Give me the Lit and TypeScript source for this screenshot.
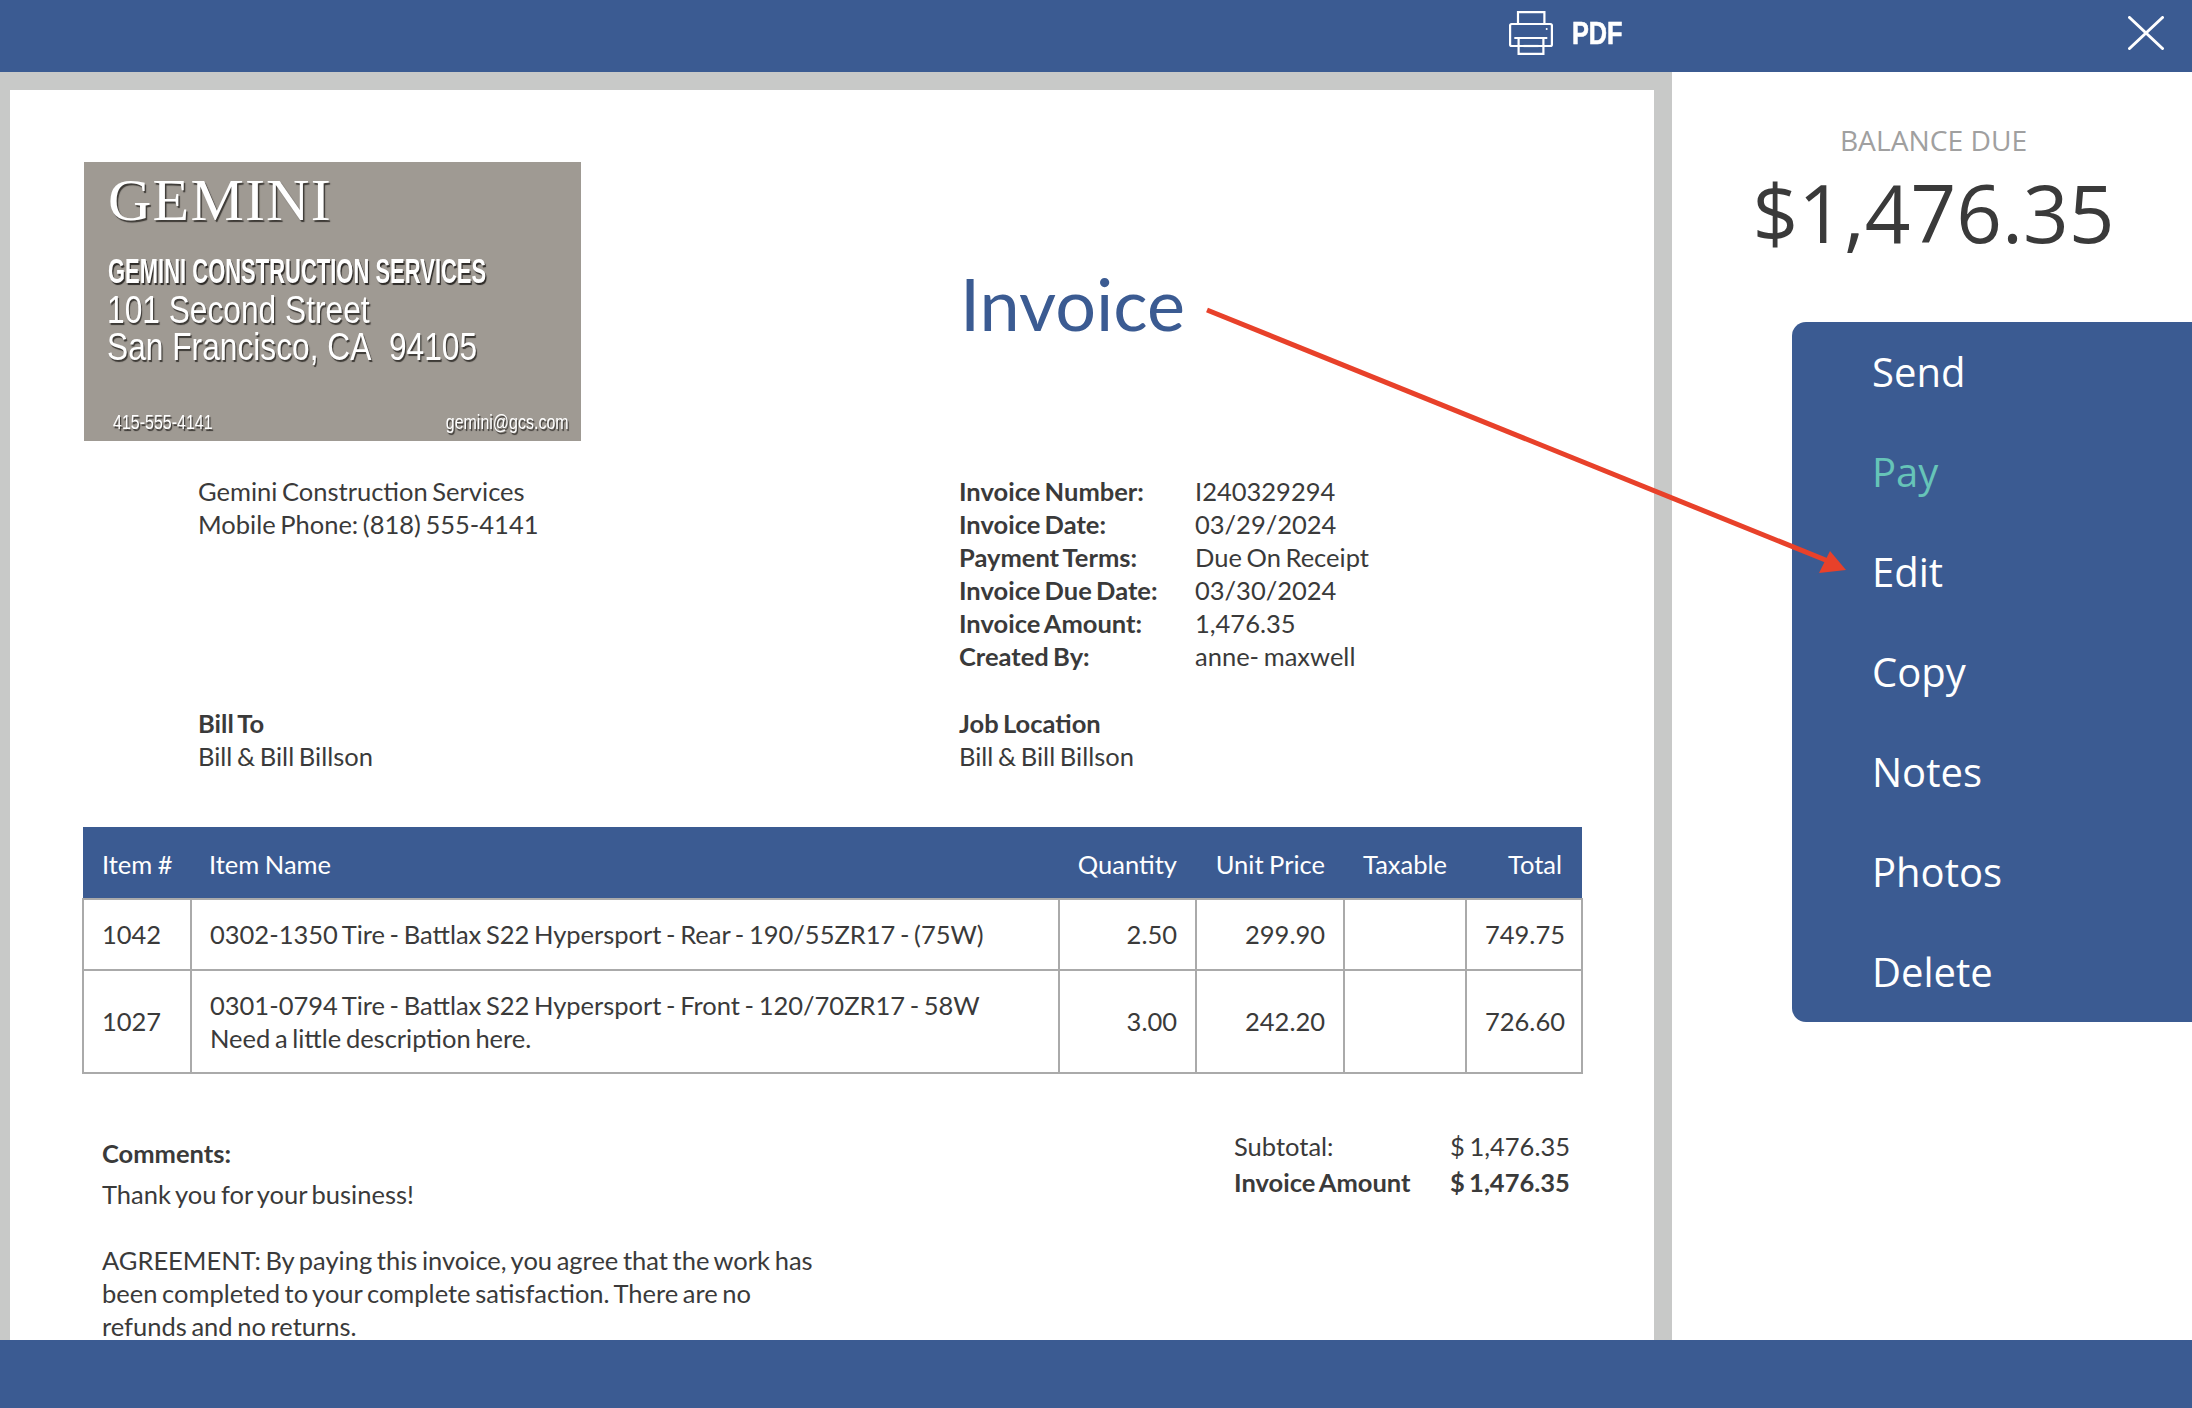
import { LitElement, html, css, svg } from 'lit';
import { customElement } from 'lit/decorators.js';

const details = [
  ['Invoice Number:', 'I240329294'],
  ['Invoice Date:', '03/29/2024'],
  ['Payment Terms:', 'Due On Receipt'],
  ['Invoice Due Date:', '03/30/2024'],
  ['Invoice Amount:', '1,476.35'],
  ['Created By:', 'anne- maxwell'],
];

const actions = ['Send', 'Pay', 'Edit', 'Copy', 'Notes', 'Photos', 'Delete'];

const printerIcon = svg`
  <svg class="printer" viewBox="0 0 44 44" fill="none" stroke="#fff" stroke-width="2.2">
    <path d="M9 13V1.2h26.4V13" />
    <rect x="1.1" y="13" width="41.8" height="22" rx="1.5" />
    <path d="M5.3 27h33" />
    <path d="M9.6 27v15.9h24.8V27" />
    <path d="M14.5 35h15" />
    <circle cx="37.7" cy="18" r="1" fill="#fff" stroke="none" />
  </svg>`;

const closeIcon = svg`
  <svg class="close" viewBox="0 0 36 34" fill="none" stroke="#fff" stroke-width="3" stroke-linecap="round">
    <path d="M1.5 1.5 34.5 32.5M34.5 1.5 1.5 32.5" />
  </svg>`;

@customElement('app-root')
export class AppRoot extends LitElement {
  static styles = css`
    :host {
      display: flex;
      flex-direction: column;
      position: relative;
      width: 2192px;
      height: 1408px;
      overflow: hidden;
      background: #fff;
      color: #3a3a3a;
      font-family: Lato, sans-serif;
      font-size: 25.5px;
      line-height: 33px;
      word-spacing: -1.9px;
    }

    .topbar {
      flex: none;
      height: 72px;
      display: flex;
      align-items: center;
      background: #3b5b92;
      color: #fff;
      padding: 0 0 6px 1509px;
      box-sizing: border-box;
    }

    .printer {
      width: 44px;
      height: 44px;
    }

    /* no narrow face is installed, so the condensed lettering is squeezed */
    .pdf {
      margin-left: 19px;
      font-family: 'Liberation Sans', sans-serif;
      font-weight: 700;
      font-size: 32px;
      -webkit-text-stroke: 0.6px #fff;
      transform: scaleX(0.79);
      transform-origin: left center;
    }

    .close {
      width: 36px;
      height: 34px;
      margin-left: auto;
      margin-right: 28px;
    }

    .middle {
      flex: 1;
      min-height: 0;
      display: flex;
    }

    .viewer {
      flex: none;
      width: 1672px;
      box-sizing: border-box;
      padding: 18px 18px 0 10px;
      background: #c8c9c8;
      overflow: hidden;
    }

    .sheet {
      background: #fff;
      height: 100%;
      padding: 72px 72px 0;
      box-sizing: border-box;
      overflow: hidden;
    }

    .head {
      display: grid;
      grid-template-columns: 875px 1fr;
      row-gap: 34px;
      margin-left: 2px;
    }

    .logo {
      width: 497px;
      height: 279px;
      box-sizing: border-box;
      padding: 8px 12px 0 23px;
      background: #9f9a93;
      color: #fff;
      font-family: 'Liberation Sans', sans-serif;
      text-shadow: 1.5px 1.5px 1px #3d3a36;
      filter: blur(0.5px);
      word-spacing: normal;
      overflow: hidden;
    }

    .logo-mark {
      font-family: 'Liberation Serif', serif;
      font-size: 60px;
      line-height: 60px;
      letter-spacing: 1.2px;
      margin-left: 1px;
    }

    .logo-name {
      width: max-content;
      margin: 21px 0 0 1px;
      font-size: 35px;
      font-weight: 700;
      line-height: 40px;
      text-shadow: 2px 2px 1px #2f2c29;
      transform: scaleX(0.628);
      transform-origin: left center;
    }

    .logo-line {
      width: max-content;
      font-size: 39px;
      line-height: 37px;
      transform: scaleX(0.813);
      transform-origin: left center;
    }

    .logo-foot {
      display: flex;
      justify-content: space-between;
      margin-top: 45px;
      padding-left: 6px;
      font-size: 20px;
      line-height: 24px;
    }

    .logo-foot span {
      transform: scaleX(0.8);
      transform-origin: left center;
    }

    .logo-foot span:last-child {
      transform-origin: right center;
    }

    .title {
      align-self: center;
      margin: 2px 0 0 1px;
      color: #3b5b92;
      font-size: 72px;
      font-weight: 400;
      line-height: 90px;
    }

    .address {
      padding-left: 114px;
    }

    .details {
      display: grid;
      grid-template-columns: 236px auto;
      justify-content: start;
    }

    b {
      font-weight: 700;
    }

    table {
      width: 1499px;
      margin-top: 54px;
      border-collapse: collapse;
      table-layout: fixed;
    }

    th {
      height: 72px;
      padding: 3px 19px 0 18px;
      box-sizing: border-box;
      background: #3b5b92;
      color: #fff;
      font-weight: 400;
      text-align: left;
      white-space: nowrap;
      word-spacing: -1px;
    }

    th:first-child {
      padding-left: 19px;
    }

    th:last-child {
      padding-right: 20px;
    }

    td {
      padding: 0 18px;
      border: 2px solid #aaa;
      white-space: nowrap;
    }

    td:last-child {
      padding-right: 22px;
    }

    .row-one td {
      height: 69px;
    }

    .row-two td {
      height: 101px;
    }

    .num {
      text-align: right;
    }

    .foot {
      display: flex;
      justify-content: space-between;
      align-items: flex-start;
      padding: 54px 12px 0 20px;
    }

    .comments {
      margin-top: 9px;
      white-space: nowrap;
    }

    .comments b {
      display: block;
      margin-bottom: 8px;
    }

    .totals {
      display: grid;
      grid-template-columns: 216px auto;
      line-height: 36px;
    }

    .balance {
      flex: 1;
      display: flex;
      flex-direction: column;
      align-items: center;
      background: #fff;
      padding: 50px 0 0 3px;
      font-family: 'Open Sans', sans-serif;
      word-spacing: normal;
    }

    .balance-label {
      color: #a0a0a0;
      font-size: 28.2px;
      line-height: 36px;
    }

    .balance-value {
      margin-top: 2px;
      font-size: 80px;
      line-height: 104px;
    }

    .actions {
      align-self: stretch;
      margin: 58px 0 0 117px;
      background: #3b5b92;
      border-radius: 14px 0 0 14px;
    }

    .action {
      height: 100px;
      box-sizing: border-box;
      display: flex;
      align-items: center;
      padding: 0 0 2px 80px;
      color: #fff;
      font-size: 40px;
    }

    .action.pay {
      color: #66c4b8;
    }

    .bottombar {
      flex: none;
      height: 68px;
      background: #3b5b92;
    }

    .arrow {
      position: absolute;
      inset: 0;
      width: 100%;
      height: 100%;
      pointer-events: none;
    }
  `;

  render() {
    return html`
      <div class="topbar">
        ${printerIcon}
        <span class="pdf">PDF</span>
        ${closeIcon}
      </div>
      <div class="middle">
        <div class="viewer">
          <div class="sheet">
            <div class="head">
              <div class="logo">
                <div class="logo-mark">GEMINI</div>
                <div class="logo-name">GEMINI CONSTRUCTION SERVICES</div>
                <div class="logo-line">101 Second Street</div>
                <div class="logo-line">San Francisco, CA&nbsp; 94105</div>
                <div class="logo-foot"><span>415-555-4141</span><span>gemini@gcs.com</span></div>
              </div>
              <h1 class="title">Invoice</h1>
              <div class="address">
                <div>Gemini Construction Services</div>
                <div>Mobile Phone: (818) 555-4141</div>
              </div>
              <div class="details">
                ${details.map(([label, value]) => html`<b>${label}</b><span>${value}</span>`)}
              </div>
              <div class="address">
                <div><b>Bill To</b></div>
                <div>Bill &amp; Bill Billson</div>
              </div>
              <div>
                <div><b>Job Location</b></div>
                <div>Bill &amp; Bill Billson</div>
              </div>
            </div>
            <table>
              <colgroup>
                <col style="width:108px" />
                <col style="width:868px" />
                <col style="width:137px" />
                <col style="width:148px" />
                <col style="width:122px" />
                <col style="width:116px" />
              </colgroup>
              <tr>
                <th>Item #</th>
                <th>Item Name</th>
                <th class="num">Quantity</th>
                <th class="num">Unit Price</th>
                <th class="num">Taxable</th>
                <th class="num">Total</th>
              </tr>
              <tr class="row-one">
                <td>1042</td>
                <td>0302-1350 Tire - Battlax S22 Hypersport - Rear - 190/55ZR17 - (75W)</td>
                <td class="num">2.50</td>
                <td class="num">299.90</td>
                <td></td>
                <td class="num">749.75</td>
              </tr>
              <tr class="row-two">
                <td>1027</td>
                <td>0301-0794 Tire - Battlax S22 Hypersport - Front - 120/70ZR17 - 58W<br />Need a little description here.</td>
                <td class="num">3.00</td>
                <td class="num">242.20</td>
                <td></td>
                <td class="num">726.60</td>
              </tr>
            </table>
            <div class="foot">
              <div class="comments">
                <b>Comments:</b>
                Thank you for your business!<br /><br />
                AGREEMENT: By paying this invoice, you agree that the work has<br />
                been completed to your complete satisfaction. There are no<br />
                refunds and no returns.
              </div>
              <div class="totals">
                <span>Subtotal:</span><span>$ 1,476.35</span>
                <b>Invoice Amount</b><b>$ 1,476.35</b>
              </div>
            </div>
          </div>
        </div>
        <div class="balance">
          <div class="balance-label">BALANCE DUE</div>
          <div class="balance-value">$1,476.35</div>
          <div class="actions">
            ${actions.map(a => html`<div class="action ${a === 'Pay' ? 'pay' : ''}">${a}</div>`)}
          </div>
        </div>
      </div>
      <div class="bottombar"></div>
      <svg class="arrow" viewBox="0 0 2192 1408">
        <path d="M1207 310 1828 561" stroke="#e8412a" stroke-width="5" fill="none" />
        <path d="M1846 570 1830 551 1819 573Z" fill="#e8412a" />
      </svg>
    `;
  }
}
